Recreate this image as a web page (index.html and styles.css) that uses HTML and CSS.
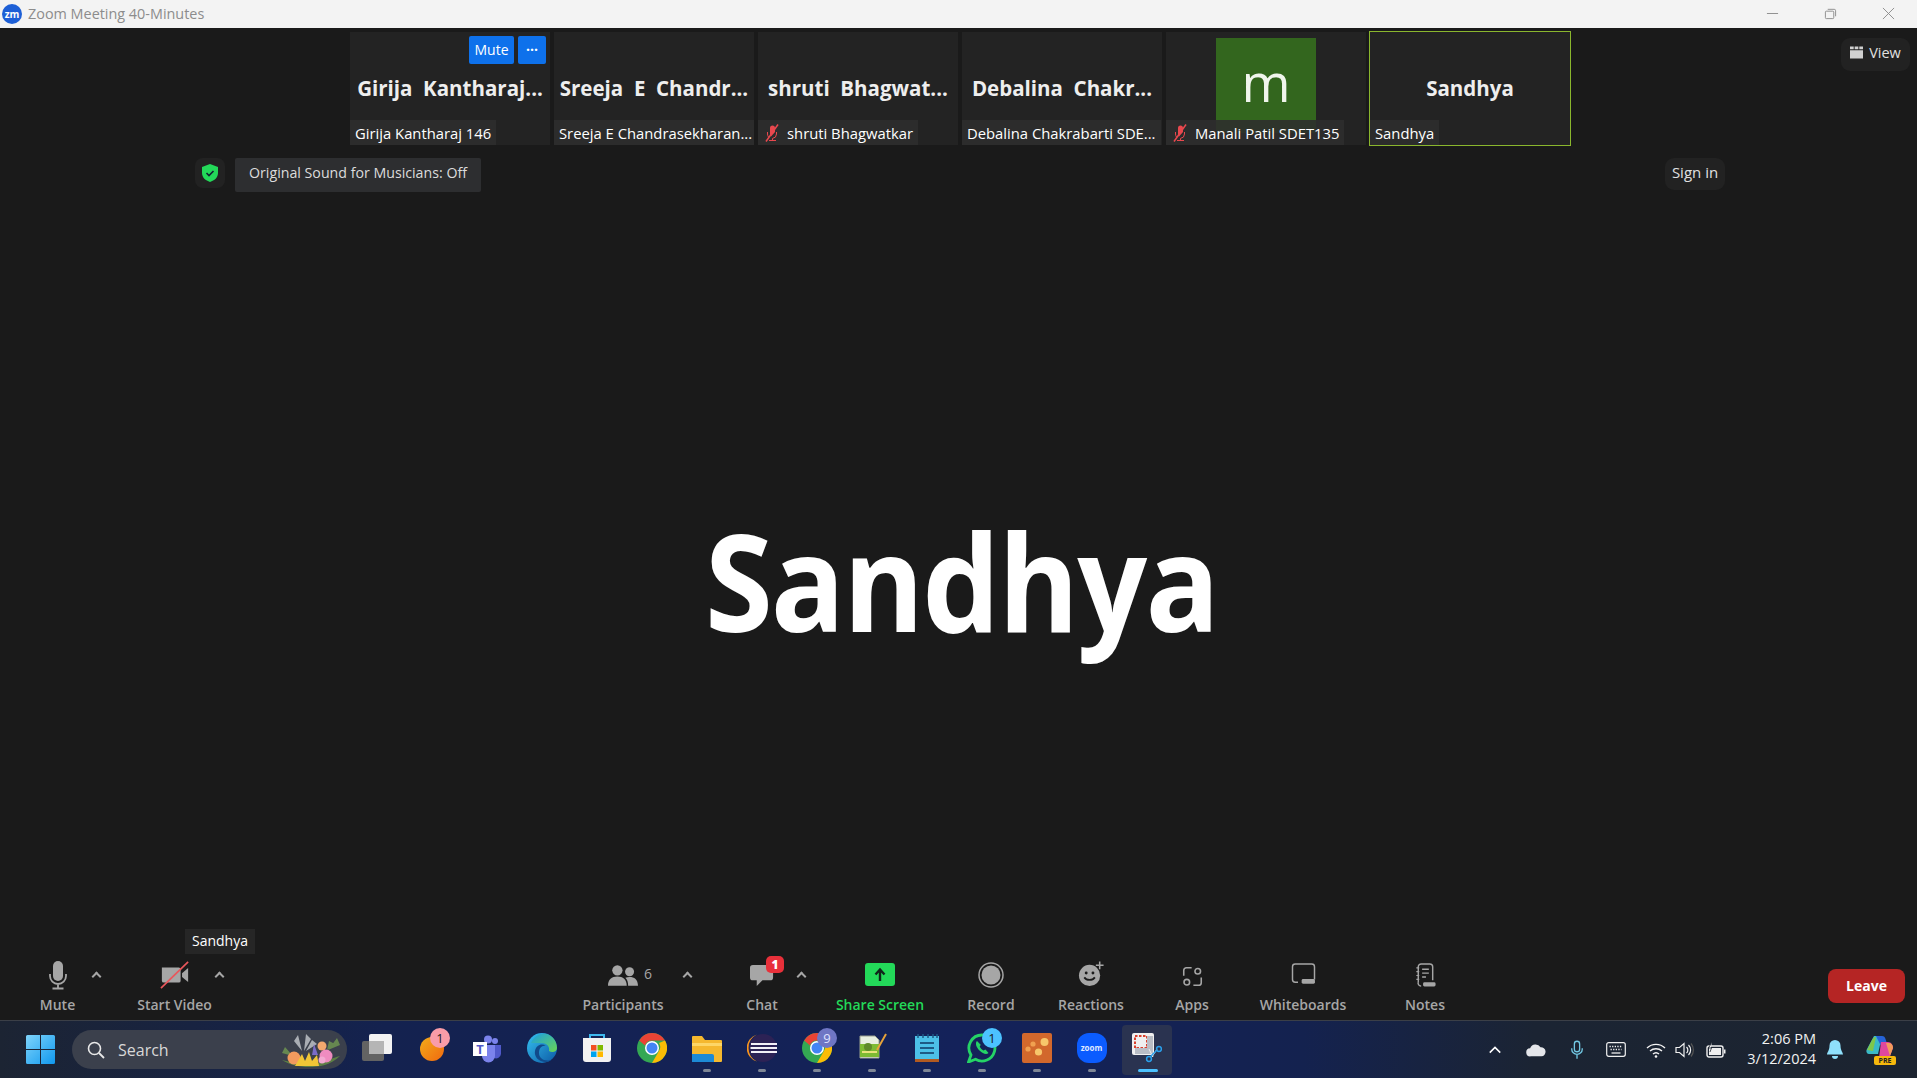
FILE: index.html
```html
<!DOCTYPE html>
<html lang="en">
<head>
    <meta charset="UTF-8">
    <title>Zoom Meeting 40-Minutes</title>
    <link rel="stylesheet" href="styles.css">
</head>
<body>

<!-- title bar -->
<div class="titlebar">
    <div class="app-badge">zm</div>
    <div class="app-title">Zoom Meeting 40-Minutes</div>
    <div class="win-buttons">
        <svg class="win-btn" viewBox="0 0 14 14"><path d="M1 7h12" stroke="#8a8a8a" fill="none"/></svg>
        <svg class="win-btn" viewBox="0 0 14 14"><path d="M2.5 4.5h7a1 1 0 0 1 1 1v6a1 1 0 0 1-1 1h-7a1 1 0 0 1-1-1v-6a1 1 0 0 1 1-1zM4 2.500h7a1.500 1.500 0 0 1 1.500 1.500v6" stroke="#8a8a8a" fill="none"/></svg>
        <svg class="win-btn" viewBox="0 0 14 14"><path d="M1 1l12 12M13 1L1 13" stroke="#8a8a8a" fill="none"/></svg>
    </div>
</div>

<div class="stage">
    <!-- thumbnails -->
    <div class="thumb-row">
        <div class="thumb">
            <div class="thumb-actions"><span class="mini-btn mute-btn">Mute</span><span class="mini-btn dots-btn">···</span></div>
            <div class="thumb-name">Girija&nbsp; Kantharaj...</div>
            <div class="thumb-label">Girija Kantharaj 146</div>
        </div>
        <div class="thumb">
            <div class="thumb-name">Sreeja&nbsp; E&nbsp; Chandr...</div>
            <div class="thumb-label">Sreeja E Chandrasekharan...</div>
        </div>
        <div class="thumb">
            <div class="thumb-name">shruti&nbsp; Bhagwat...</div>
            <div class="thumb-label">
                <svg class="muted-mic" viewBox="0 0 16 18"><path d="M8.500 1.500a2.500 2.500 0 0 1 2.500 2.500v4l-4 4.500a2.500 2.500 0 0 1-1-2V4a2.500 2.500 0 0 1 2.500-2.500z" fill="#e8484e"/><path d="M3.500 8v2a5 5 0 0 0 1 3M12.500 8v2a4.500 4.500 0 0 1-4 4.400V16M5 16.500h7" fill="none" stroke="#e8484e"/><path d="M14 .5L2 17.500" stroke="#e8484e" stroke-width="1.500"/></svg>
                shruti Bhagwatkar
            </div>
        </div>
        <div class="thumb">
            <div class="thumb-name">Debalina&nbsp; Chakr...</div>
            <div class="thumb-label">Debalina Chakrabarti SDE...</div>
        </div>
        <div class="thumb">
            <div class="avatar">m</div>
            <div class="thumb-label">
                <svg class="muted-mic" viewBox="0 0 16 18"><path d="M8.500 1.500a2.500 2.500 0 0 1 2.500 2.500v4l-4 4.500a2.500 2.500 0 0 1-1-2V4a2.500 2.500 0 0 1 2.500-2.500z" fill="#e8484e"/><path d="M3.500 8v2a5 5 0 0 0 1 3M12.500 8v2a4.500 4.500 0 0 1-4 4.400V16M5 16.500h7" fill="none" stroke="#e8484e"/><path d="M14 .5L2 17.500" stroke="#e8484e" stroke-width="1.500"/></svg>
                Manali Patil SDET135
            </div>
        </div>
        <div class="thumb thumb-active">
            <div class="thumb-name">Sandhya</div>
            <div class="thumb-label">Sandhya</div>
        </div>
    </div>

    <div class="view-btn">
        <svg class="view-icon" viewBox="0 0 14 13"><path d="M0 0h4v3H0zM5 0h4v3H5zM10 0h4v3h-4zM0 4h14v9H0z" fill="#d0d0d0"/></svg>
        View
    </div>

    <!-- status row -->
    <div class="status-row">
        <div class="shield-box">
            <svg class="shield" viewBox="0 0 16 18"><path d="M8 0l8 3v6c0 4.500-3.500 7.500-8 9-4.500-1.500-8-4.500-8-9V3z" fill="#23d959"/><path d="M4.500 9l2.500 2.500 4.500-4.500" fill="none" stroke="#123" stroke-width="1.600"/></svg>
        </div>
        <div class="sound-box">Original Sound for Musicians: Off</div>
        <div class="sign-in">Sign in</div>
    </div>

    <!-- main speaker -->
    <div class="main-name"><span class="main-name-text">Sandhya</span></div>

    <!-- meeting controls -->
    <div class="toolbar">
        <div class="tool tool-mute">
            <svg class="tool-icon" viewBox="0 0 30 30"><path d="M15 1a5 5 0 0 1 5 5v10a5 5 0 0 1-10 0V6a5 5 0 0 1 5-5z" fill="#a6a6a6"/><path d="M7 14v2a8 8 0 0 0 16 0v-2M15 24v4M9.500 28.500h11" fill="none" stroke="#a6a6a6" stroke-width="1.800"/></svg>
            <span>Mute</span>
            <i class="caret"></i>
        </div>
        <div class="tool tool-video">
            <svg class="tool-icon" viewBox="0 0 32 30"><path d="M2 7h18a2 2 0 0 1 2 2v12a2 2 0 0 1-2 2H4a2 2 0 0 1-2-2z" fill="#a6a6a6"/><path d="M23.500 13l6.500-5.500v15L23.500 17z" fill="#a6a6a6"/><path d="M1 29L30 1" stroke="#e8565b" stroke-width="1.800"/></svg>
            <span>Start Video</span>
            <i class="caret"></i>
        </div>
        <div class="tooltip">Sandhya</div>

        <div class="tool-center">
            <div class="tool tool-people">
                <div class="people-icon">
                    <svg class="tool-icon" viewBox="0 0 32 24"><circle cx="10" cy="6.500" r="5.500" fill="#a6a6a6"/><circle cx="23" cy="8" r="4.800" fill="#a6a6a6"/><path d="M0 23c0-7 4-10 10-10s10 3 10 10zM21.500 23c0-4-1-6.500-3-8.500 1.500-.8 3-1 4.500-1 5 0 9 2.500 9 9.500z" fill="#a6a6a6"/></svg>
                    <em class="people-count">6</em>
                </div>
                <span>Participants</span>
                <i class="caret"></i>
            </div>
            <div class="tool tool-chat">
                <svg class="tool-icon" viewBox="0 0 28 26"><path d="M4 2h18a3 3 0 0 1 3 3v10a3 3 0 0 1-3 3H14l-6 6v-6H4a3 3 0 0 1-3-3V5a3 3 0 0 1 3-3z" fill="#a6a6a6"/></svg>
                <b class="chat-badge">1</b>
                <span>Chat</span>
                <i class="caret"></i>
            </div>
            <div class="tool tool-share">
                <svg class="tool-icon" viewBox="0 0 30 23"><rect width="30" height="23" rx="3" fill="#23d959"/><path d="M15 18V7M10.500 11.500L15 6.500l4.500 5" fill="none" stroke="#10241a" stroke-width="2.400"/></svg>
                <span>Share Screen</span>
            </div>
            <div class="tool tool-record">
                <svg class="tool-icon" viewBox="0 0 26 26"><circle cx="13" cy="13" r="12" fill="none" stroke="#a6a6a6" stroke-width="1.500"/><circle cx="13" cy="13" r="9.500" fill="#a6a6a6"/></svg>
                <span>Record</span>
            </div>
            <div class="tool tool-react">
                <svg class="tool-icon" viewBox="0 0 28 26"><circle cx="12" cy="14.500" r="11" fill="#a6a6a6"/><circle cx="8.500" cy="12" r="1.500" fill="#1a1a1a"/><circle cx="15.500" cy="12" r="1.500" fill="#1a1a1a"/><path d="M6.500 16.500c2.500 3.500 8.500 3.500 11 0" fill="none" stroke="#1a1a1a" stroke-width="1.800"/><path d="M22.500 0v8M18.500 4h8" stroke="#a6a6a6" stroke-width="1.600"/></svg>
                <span>Reactions</span>
            </div>
            <div class="tool tool-apps">
                <svg class="tool-icon" viewBox="0 0 24 24"><path d="M2 11V5a3 3 0 0 1 3-3h6M22 13v6a3 3 0 0 1-3 3h-6" fill="none" stroke="#a6a6a6" stroke-width="1.800"/><circle cx="18" cy="6" r="3.200" fill="none" stroke="#a6a6a6" stroke-width="1.800"/><circle cx="5.500" cy="18.500" r="3.200" fill="none" stroke="#a6a6a6" stroke-width="1.800"/></svg>
                <span>Apps</span>
            </div>
            <div class="tool tool-board">
                <svg class="tool-icon" viewBox="0 0 26 24"><path d="M7 21H4a3 3 0 0 1-3-3V4a3 3 0 0 1 3-3h18a3 3 0 0 1 3 3v14" fill="none" stroke="#a6a6a6" stroke-width="1.600"/><rect x="11" y="17.500" width="14.500" height="5" rx="1.500" fill="#a6a6a6"/></svg>
                <span>Whiteboards</span>
            </div>
            <div class="tool tool-notes">
                <svg class="tool-icon" viewBox="0 0 24 26"><path d="M5 20V4a3 3 0 0 1 3-3h9a3 3 0 0 1 3 3v14M5 20a3 3 0 0 0 3 4" fill="none" stroke="#a6a6a6" stroke-width="1.500"/><path d="M9 6.500h7M9 10.500h7M9 14.500h4" stroke="#a6a6a6" stroke-width="1.500"/><path d="M3 5h3M3 9h3M3 13h3M3 17h3" stroke="#a6a6a6" stroke-width="1.200"/><rect x="10" y="20" width="13" height="4.500" rx="1.500" fill="#a6a6a6"/></svg>
                <span>Notes</span>
            </div>
        </div>

        <div class="leave-btn">Leave</div>
    </div>
</div>

<!-- windows taskbar -->
<div class="taskbar">
    <svg class="start-icon" viewBox="0 0 29 29">
        <defs><linearGradient id="winBlue" x1="0" y1="0" x2="1" y2="1"><stop offset="0" stop-color="#7fd4fb"/><stop offset="1" stop-color="#1098ee"/></linearGradient></defs>
        <path d="M1.500 0H14v14H0V1.500A1.500 1.500 0 0 1 1.500 0zM15 0h12.500A1.500 1.500 0 0 1 29 1.500V14H15zM0 15h14v14H1.500A1.500 1.500 0 0 1 0 27.500zM15 15h14v12.500a1.500 1.500 0 0 1-1.500 1.500H15z" fill="url(#winBlue)"/>
    </svg>
    <div class="searchbox">
        <svg class="search-icon" viewBox="0 0 18 18"><circle cx="7.500" cy="7.500" r="6" fill="none" stroke="#e8e8e8" stroke-width="1.600"/><path d="M12 12l5 5" stroke="#e8e8e8" stroke-width="1.800"/></svg>
        <span class="search-text">Search</span>
        <svg class="search-art" viewBox="0 0 60 34">
            <path d="M1 27c8 5 17 7 27 7s22-2 31-11c-8 2-13 5-20 7-10 2-21 1-38-3z" fill="#5d7f45"/>
            <path d="M4 14l8 9-11-3zM56 5l-9 12 12-5zM48 8l-2 9 8-6z" fill="#668750"/>
            <path d="M17 2l4 16-8-10zM25 1l-2 17 7-12zM31 7l-6 11 11-7z" fill="#a9adb3"/>
            <circle cx="13" cy="25" r="6.500" fill="#f39a5e"/><circle cx="41" cy="13" r="4.500" fill="#f3a86e"/>
            <path d="M14 33l7-12 3 7 4-9 3 9 5-6 2 11z" fill="#f1c636"/>
            <path d="M31 22l2-11 4 11z" fill="#7a6cc9"/>
            <circle cx="45" cy="23" r="6.500" fill="#ef8cc0"/><circle cx="41" cy="27" r="3.500" fill="#f3a9d2"/>
        </svg>
    </div>

    <div class="task-icons">
        <div class="task-item">
            <svg class="task-svg" viewBox="0 0 30 30"><rect x="0" y="8" width="22" height="20" rx="2" fill="#636363"/><rect x="7" y="1" width="23" height="20" rx="2" fill="#f2f2f2"/><rect x="7" y="8" width="15" height="13" fill="#b5b5b5"/></svg>
        </div>
        <div class="task-item">
            <svg class="task-svg" viewBox="0 0 30 30">
                <defs><linearGradient id="orange" x1="0" y1="0" x2="1" y2="1"><stop offset="0" stop-color="#f2ac1a"/><stop offset="1" stop-color="#f0690f"/></linearGradient></defs>
                <circle cx="15" cy="16" r="12" fill="url(#orange)"/>
            </svg>
            <b class="task-badge badge-pink">1</b>
        </div>
        <div class="task-item">
            <svg class="task-svg" viewBox="0 0 30 30"><circle cx="23" cy="8" r="3" fill="#7b83eb"/><circle cx="16" cy="6.500" r="4" fill="#7b83eb"/><path d="M20 12h9v9a5 5 0 0 1-7 4z" fill="#5059c9"/><path d="M10 12h13v11a6.500 6.500 0 0 1-13 0z" fill="#7b83eb"/><rect x="1" y="9" width="14" height="14" fill="#fff"/><text x="8" y="20.500" class="teams-t">T</text></svg>
        </div>
        <div class="task-item">
            <svg class="task-svg" viewBox="0 0 30 30">
                <defs><linearGradient id="edge1" x1="0" y1="0" x2="1" y2="1"><stop offset="0" stop-color="#35c1f1"/><stop offset="1" stop-color="#0c59a4"/></linearGradient><linearGradient id="edge2" x1="0" y1="0" x2="1" y2="1"><stop offset="0" stop-color="#1b9de2"/><stop offset="1" stop-color="#6ad652"/></linearGradient></defs>
                <circle cx="15" cy="15" r="15" fill="url(#edge1)"/>
                <path d="M4 10C7 3 14 0 19 1c6 1 11 7 11 14 0 4-5 5-8 3 1-4-2-8-7-8-4 0-8 0-11 0z" fill="url(#edge2)"/>
                <path d="M12 20c0-5 3-8 7-7-4-3-10-1-11 5-1 5 3 11 11 11 2 0 4-1 5-2-7 2-12-2-12-7z" fill="#114a8b"/>
            </svg>
        </div>
        <div class="task-item">
            <svg class="task-svg" viewBox="0 0 30 30"><path d="M8 5V2h14v3" fill="none" stroke="#3fb9ee" stroke-width="2"/><path d="M1 5h28v21a3 3 0 0 1-3 3H4a3 3 0 0 1-3-3z" fill="#f2f2f2"/><path d="M9 12h5.500v5.500H9z" fill="#f25022"/><path d="M15.500 12H21v5.500h-5.500z" fill="#7fba00"/><path d="M9 18.500h5.500V24H9z" fill="#00a4ef"/><path d="M15.500 18.500H21V24h-5.500z" fill="#ffb900"/></svg>
        </div>
        <div class="task-item">
            <svg class="task-svg" viewBox="0 0 30 30"><circle cx="15" cy="15" r="15" fill="#34a853"/><path d="M15 0a15 15 0 0 1 13 7.500H15a7.500 7.500 0 0 0-7 5L2.200 7.500A15 15 0 0 1 15 0z" fill="#ea4335"/><path d="M28 7.500A15 15 0 0 1 15 30l6.500-11.300A7.500 7.500 0 0 0 22 10z" fill="#fbbc05"/><circle cx="15" cy="15" r="7" fill="#fff"/><circle cx="15" cy="15" r="5.500" fill="#4285f4"/></svg>
        </div>
        <div class="task-item has-dot">
            <svg class="task-svg" viewBox="0 0 30 30"><path d="M0 4a1 1 0 0 1 1-1h9l3 4h16a1 1 0 0 1 1 1v20a1 1 0 0 1-1 1H1a1 1 0 0 1-1-1z" fill="#f5b82e"/><path d="M0 10h30v3H0z" fill="#fdd667"/><path d="M0 21h20a2 2 0 0 1 2 2v6H0z" fill="#1d8ad6"/></svg>
        </div>
        <div class="task-item has-dot">
            <svg class="task-svg" viewBox="0 0 30 30"><circle cx="16" cy="15" r="14" fill="#2c2255"/><path d="M10 1.500a14 14 0 0 0 0 27 15 15 0 0 1 0-27z" fill="#f7941e"/><path d="M4 10h26v2H4zM3.500 14h27v2h-27zM4 18h26v2H4z" fill="#f2f0f7"/></svg>
        </div>
        <div class="task-item has-dot">
            <svg class="task-svg" viewBox="0 0 30 30"><circle cx="15" cy="15" r="15" fill="#34a853"/><path d="M15 0a15 15 0 0 1 13 7.500H15a7.500 7.500 0 0 0-7 5L2.200 7.500A15 15 0 0 1 15 0z" fill="#ea4335"/><path d="M28 7.500A15 15 0 0 1 15 30l6.500-11.300A7.500 7.500 0 0 0 22 10z" fill="#fbbc05"/><circle cx="15" cy="15" r="7" fill="#fff"/><circle cx="15" cy="15" r="5.500" fill="#4285f4"/></svg>
            <b class="task-badge badge-violet">9</b>
        </div>
        <div class="task-item has-dot">
            <svg class="task-svg" viewBox="0 0 30 30"><path d="M3 3h15l4 4v18H3z" fill="#e8efe0" stroke="#9aa08f"/><path d="M3 11h19v13H3z" fill="#7dbb33"/><circle cx="11" cy="14" r="4" fill="#5e8a2a"/><path d="M5 18h15v2H5z" fill="#e9e37a"/><path d="M29 1L20 17" stroke="#e6a33a" stroke-width="2"/></svg>
        </div>
        <div class="task-item has-dot">
            <svg class="task-svg" viewBox="0 0 30 30"><path d="M3 3h24v24H3z" fill="#4cc0e8"/><path d="M3 26h24v3H3z" fill="#b25a21"/><path d="M8 10h14M8 15h14M8 20h14" stroke="#1e5a85" stroke-width="2"/><path d="M6 1v4M11 1v4M16 1v4M21 1v4M25 1v4" stroke="#1e5a85" stroke-width="1.500"/></svg>
        </div>
        <div class="task-item has-dot">
            <svg class="task-svg" viewBox="0 0 30 30"><path d="M15 2a13 13 0 1 1-6.500 24.300L1.500 29l2.500-7A13 13 0 0 1 15 2z" fill="none" stroke="#25d366" stroke-width="2.800"/><path d="M10 8c-2 2-1 6 2.500 9.500s7 4.500 9 2.500l-3-3.500-2 1c-1.500-.8-3-2.300-3.800-3.800l1-2z" fill="#25d366"/></svg>
            <b class="task-badge badge-blue">1</b>
        </div>
        <div class="task-item has-dot">
            <svg class="task-svg" viewBox="0 0 30 30"><rect width="30" height="30" rx="2" fill="#d2682c"/><circle cx="22.500" cy="9" r="4" fill="#f7c76b"/><circle cx="16.500" cy="19" r="3.600" fill="#f7c76b"/><circle cx="11" cy="11" r="2.600" fill="#f0a050"/><circle cx="6" cy="16" r="2.600" fill="#f0a050"/></svg>
        </div>
        <div class="task-item has-dot">
            <div class="zoom-app">zoom</div>
        </div>
        <div class="task-item has-dot task-active">
            <svg class="task-svg" viewBox="0 0 30 30"><rect x="0" y="0" width="22" height="22" rx="2" fill="#f0f0f0"/><path d="M3 3h12v12H3z" fill="none" stroke="#d9412e" stroke-width="2" stroke-dasharray="2.500 1.500"/><path d="M15 15h6v6h-6zM15 3h6v12h-6zM3 15h12v6H3z" fill="#b9bdc5"/><path d="M17 16l4 8M25 16l-5 8" stroke="#eee"/><circle cx="27" cy="16" r="2.400" fill="none" stroke="#2aa0ec" stroke-width="1.500"/><circle cx="17" cy="26" r="2.400" fill="none" stroke="#2aa0ec" stroke-width="1.500"/><path d="M25 17l-7 7" stroke="#2aa0ec" stroke-width="1.500"/></svg>
        </div>
    </div>

    <div class="tray">
        <svg class="tray-icon tray-chevron" viewBox="0 0 16 16"><path d="M2 11l6-6 6 6" fill="none" stroke="#fff" stroke-width="1.800"/></svg>
        <svg class="tray-icon tray-cloud" viewBox="0 0 22 14"><path d="M5 14a4.500 4.500 0 0 1-.5-9A6.500 6.500 0 0 1 16 4a5 5 0 0 1 1 10z" fill="#e4e6ea"/></svg>
        <svg class="tray-icon tray-mic" viewBox="0 0 16 22"><rect x="5" y="1" width="6" height="12" rx="3" fill="none" stroke="#72c8e4" stroke-width="1.500"/><path d="M2 9v1a6 6 0 0 0 12 0V9M8 16v5" fill="none" stroke="#72c8e4" stroke-width="1.500"/></svg>
        <svg class="tray-icon tray-keys" viewBox="0 0 20 15"><rect x=".7" y=".7" width="18.600" height="13.600" rx="2" fill="none" stroke="#f0f0f0" stroke-width="1.200"/><path d="M3.500 4.500h13M4.500 7.500h11" stroke="#f0f0f0" stroke-width="1.300" stroke-dasharray="1.300 1.300"/><path d="M5.500 11h9" stroke="#f0f0f0" stroke-width="1.300"/></svg>
        <svg class="tray-icon tray-wifi" viewBox="0 0 20 16"><path d="M1 6a13 13 0 0 1 18 0M4 9a9 9 0 0 1 12 0M7 12a4.500 4.500 0 0 1 6 0" fill="none" stroke="#f4f4f4" stroke-width="1.400"/><circle cx="10" cy="14.500" r="1.300" fill="#f4f4f4"/></svg>
        <svg class="tray-icon tray-sound" viewBox="0 0 20 16"><path d="M1 5.500h3.500L9 1.500v13l-4.500-4H1z" fill="none" stroke="#f0f0f0" stroke-width="1.200"/><path d="M11.500 5a4 4 0 0 1 0 6M13.500 3a7 7 0 0 1 0 10" fill="none" stroke="#f0f0f0" stroke-width="1.200"/><path d="M16 1.500a10 10 0 0 1 0 13" fill="none" stroke="#555" stroke-width="1.200"/></svg>
        <svg class="tray-icon tray-battery" viewBox="0 0 20 16"><rect x="1" y="4" width="16" height="11" rx="2" fill="none" stroke="#f0f0f0" stroke-width="1.400"/><rect x="3" y="6" width="12" height="7" fill="#f0f0f0"/><rect x="18" y="7.500" width="1.500" height="4" fill="#f0f0f0"/><path d="M6 0L2.500 6h3L4 10" fill="#f0f0f0" stroke="#1d2430" stroke-width=".8"/></svg>
        <div class="clock"><div>2:06 PM</div><div>3/12/2024</div></div>
        <svg class="tray-icon tray-bell" viewBox="0 0 16 20"><path d="M8 0a5.500 5.500 0 0 1 5.500 5.500c0 5 2.500 7 2.500 9H0c0-2 2.500-4 2.500-9A5.500 5.500 0 0 1 8 0z" fill="#8fe0fb"/><path d="M5 16h6a3 3 0 0 1-6 0z" fill="#8fe0fb"/></svg>
        <div class="copilot">
            <svg class="copilot-svg" viewBox="0 0 28 24">
                <path d="M8 1h8l-4 18H3c-2 0-3-2-2.500-4z" fill="#39b9c8"/><path d="M1 15L6 5c1-2 2-3 4-3l-3 14z" fill="#7fc74a"/>
                <path d="M10 1h6c2 0 3 1 3.500 3L23 15H17z" fill="#2563d8"/><path d="M15 7h7c3 0 5 3 5 6l-3 8c-.5 1-2 2-3 2h-8z" fill="#e0479e"/><path d="M20 8h3c3 0 4 3 4 5l-3 8z" fill="#f39b5a"/>
            </svg>
            <span class="pre-tag">PRE</span>
        </div>
    </div>
</div>

</body>
</html>
```

FILE: styles.css
```css
* {
    box-sizing: border-box;
}

body {
    margin: 0;
    width: 1917px;
    height: 1078px;
    overflow: hidden;
    display: flex;
    flex-direction: column;
    font-family: "Open Sans", "Noto Sans", sans-serif;
    background: #1a1a1a;
}

/* title bar */
.titlebar {
    height: 28px;
    flex: none;
    display: flex;
    align-items: center;
    padding-left: 2px;
    padding-bottom: 1px;
    background: #f3f3f3;
}

.app-badge {
    width: 20px;
    height: 20px;
    border-radius: 50%;
    background: #1d5fd6;
    color: #fff;
    font-size: 10px;
    font-weight: 700;
    line-height: 20px;
    text-align: center;
}

.app-title {
    margin-left: 6px;
    font-size: 14.4px;
    color: #8c8c8c;
}

.win-buttons {
    margin-left: auto;
    display: flex;
    gap: 45px;
    padding-right: 22px;
}

.win-btn {
    width: 13px;
    height: 13px;
}

/* stage */
.stage {
    position: relative;
    flex: 1;
    display: flex;
    flex-direction: column;
    background: #1a1a1a;
    color: #fff;
}

.thumb-row {
    display: flex;
    gap: 4px;
    padding: 4px 0 0 350px;
    height: 118px;
}

.thumb {
    position: relative;
    width: 200px;
    height: 113px;
    background: #232323;
    display: flex;
    align-items: center;
    justify-content: center;
}

.thumb-active {
    outline: 1px solid #8ab62d;
}

.thumb-name {
    font-size: 20.5px;
    font-weight: 700;
    color: #eee;
    white-space: nowrap;
    margin-top: -2px;
}

.thumb-label {
    position: absolute;
    left: 0;
    bottom: 0;
    max-width: 100%;
    height: 25px;
    display: flex;
    align-items: center;
    gap: 6px;
    padding: 0 5px;
    background: rgba(46, 46, 46, .88);
    font-size: 14.8px;
    color: #fff;
    white-space: nowrap;
}

.muted-mic {
    width: 18px;
    height: 18px;
}

.thumb-actions {
    position: absolute;
    top: 4px;
    right: 4px;
    display: flex;
    gap: 4px;
}

.mini-btn {
    height: 28px;
    line-height: 28px;
    background: #0e71eb;
    border-radius: 2px;
    text-align: center;
    font-size: 14px;
    color: #fff;
}

.mute-btn {
    width: 45px;
}

.dots-btn {
    width: 28px;
    font-weight: 700;
    font-size: 14px;
}

.avatar {
    align-self: flex-start;
    width: 100px;
    height: 95px;
    margin-top: 6px;
    background: #33661e;
    color: #f0f5ec;
    font-size: 53px;
    font-weight: 500;
    text-align: center;
    line-height: 87px;
}

.view-btn {
    position: absolute;
    top: 10px;
    right: 7px;
    width: 69px;
    height: 33px;
    padding-bottom: 4px;
    border-radius: 9px;
    background: #222;
    display: flex;
    align-items: center;
    justify-content: center;
    gap: 6px;
    font-size: 14.5px;
    color: #e0e0e0;
}

.view-icon {
    width: 13px;
    height: 13px;
}

/* status row */
.status-row {
    display: flex;
    align-items: flex-start;
    padding: 12px 192px 0 195px;
    height: 46px;
}

.shield-box {
    width: 30px;
    height: 30px;
    border-radius: 8px;
    background: #222;
    display: flex;
    align-items: center;
    justify-content: center;
}

.shield {
    width: 16px;
    height: 18px;
}

.sound-box {
    margin-left: 10px;
    width: 246px;
    height: 34px;
    border-radius: 2px;
    background: #2d2e30;
    text-align: center;
    font-size: 14.2px;
    line-height: 30px;
    color: #dcdcdc;
}

.sign-in {
    margin-left: auto;
    width: 60px;
    height: 32px;
    border-radius: 9px;
    background: #222;
    text-align: center;
    font-size: 15px;
    line-height: 29px;
    color: #e0e0e0;
}

.main-name {
    flex: 1;
    display: flex;
    align-items: center;
    justify-content: center;
    padding: 9px 0 0 5px;
    color: #fff;
}

.main-name-text {
    font-size: 134px;
    font-weight: 700;
    letter-spacing: -2px;
    transform: scaleX(.918);
}

/* toolbar */
.toolbar {
    position: relative;
    flex: none;
    height: 61px;
    display: flex;
    padding-left: 20px;
}

.tool {
    position: relative;
    display: flex;
    flex-direction: column;
    align-items: center;
    flex: none;
    width: 60px;
    color: #a6a6a6;
    font-size: 14px;
    font-weight: 600;
    white-space: nowrap;
}

.tool span {
    position: absolute;
    top: 36px;
    left: 50%;
    transform: translateX(-50%);
}

.tool-icon {
    display: block;
    width: 30px;
    height: 30px;
    margin-top: 1px;
}

.caret {
    position: absolute;
    top: 14px;
    width: 7px;
    height: 7px;
    border-left: 2px solid #a6a6a6;
    border-top: 2px solid #a6a6a6;
    transform: rotate(45deg);
}

.tool-mute {
    width: 75px;
}

.tool-mute .caret {
    right: -5px;
}

.tool-video {
    width: 75px;
    margin-left: 42px;
}

.tool-video .caret {
    right: -11px;
}

.tool-center {
    display: flex;
    position: absolute;
    left: 0;
    top: 0;
    padding-left: 585px;
}

.tool-people {
    width: 76px;
}

.tool-people .caret {
    right: -30px;
}

.tool-people .tool-icon {
    height: 23px;
    margin-top: 5px;
}

.people-icon {
    position: relative;
}

.people-count {
    position: absolute;
    left: 36px;
    top: 5px;
    font-style: normal;
    font-weight: 400;
    font-size: 14px;
}

.tool-chat {
    margin-left: 71px;
}

.tool-chat .caret {
    right: -13px;
}

.tool-chat .tool-icon {
    width: 27px;
    height: 25px;
    margin-top: 4px;
}

.chat-badge {
    position: absolute;
    top: -3px;
    left: 34px;
    width: 18px;
    height: 17px;
    border-radius: 5px;
    background: #e8303a;
    color: #fff;
    font-size: 12px;
    line-height: 17px;
    text-align: center;
}

.tool-share {
    margin-left: 58px;
}

.tool-share span {
    color: #23d959;
}

.tool-share .tool-icon {
    height: 23px;
    margin-top: 4px;
}

.tool-record {
    margin-left: 51px;
}

.tool-record .tool-icon {
    width: 26px;
    height: 26px;
    margin-top: 3px;
}

.tool-react {
    margin-left: 40px;
}

.tool-react .tool-icon {
    width: 27px;
    height: 26px;
    margin-top: 2px;
}

.tool-apps {
    margin-left: 41px;
}

.tool-apps .tool-icon {
    width: 21px;
    height: 21px;
    margin-top: 7px;
}

.tool-board {
    margin-left: 51px;
}

.tool-board .tool-icon {
    width: 25px;
    height: 22px;
    margin-top: 4px;
}

.tool-notes {
    margin-left: 62px;
}

.tool-notes .tool-icon {
    width: 24px;
    height: 25px;
    margin-top: 4px;
}

.tooltip {
    position: absolute;
    top: -30px;
    left: 185px;
    width: 70px;
    height: 25px;
    background: #262626;
    text-align: center;
    font-size: 14px;
    line-height: 24px;
    color: #fff;
}

.leave-btn {
    position: absolute;
    right: 12px;
    top: 10px;
    width: 77px;
    height: 34px;
    border-radius: 8px;
    background: #b52524;
    color: #fff;
    font-size: 14px;
    font-weight: 700;
    text-align: center;
    line-height: 33px;
}

/* taskbar */
.taskbar {
    position: relative;
    flex: none;
    height: 58px;
    display: flex;
    align-items: center;
    border-top: 1px solid #3b3f47;
    background: linear-gradient(90deg, #1c2433 0, #14224f 20%, #14225a 50%, #14224f 68%, #1b2433 80%, #1c2430 100%);
    padding-left: 26px;
}

.start-icon {
    width: 29px;
    height: 29px;
    flex: none;
}

.searchbox {
    margin-left: 17px;
    width: 275px;
    height: 39px;
    flex: none;
    border-radius: 20px;
    background: #3b404c;
    display: flex;
    align-items: center;
    padding-left: 15px;
    position: relative;
}

.search-icon {
    width: 18px;
    height: 18px;
}

.search-text {
    margin-left: 13px;
    font-size: 16px;
    color: #d8d8d8;
}

.search-art {
    position: absolute;
    right: 6px;
    top: 3px;
    width: 60px;
    height: 34px;
}

.task-icons {
    display: flex;
    margin-left: 2px;
    height: 100%;
}

.task-item {
    position: relative;
    width: 55px;
    height: 100%;
    padding-bottom: 3px;
    display: flex;
    align-items: center;
    justify-content: center;
}

.task-svg {
    width: 30px;
    height: 30px;
}

.has-dot::after {
    content: "";
    position: absolute;
    left: 24px;
    bottom: 6px;
    width: 8px;
    height: 3px;
    border-radius: 2px;
    background: #7f8796;
}

.task-active::before {
    content: "";
    position: absolute;
    left: 3px;
    top: 4px;
    width: 50px;
    height: 50px;
    border-radius: 4px;
    background: #2a3350;
}

.task-active .task-svg {
    position: relative;
}

.task-active::after {
    left: 19px;
    width: 20px;
    background: #4cc2ff;
}

.teams-t {
    font-family: "Open Sans", sans-serif;
    font-size: 13px;
    font-weight: 700;
    fill: #5059c9;
    text-anchor: middle;
}

.task-badge {
    position: absolute;
    top: 7px;
    left: 28px;
    width: 20px;
    height: 20px;
    border-radius: 50%;
    font-size: 13px;
    font-weight: 400;
    line-height: 20px;
    text-align: center;
    color: #1a1a1a;
}

.badge-pink {
    left: 26px;
    background: #f99ca8;
}

.badge-violet {
    background: #6f76c4;
    color: #dfe2ff;
}

.badge-blue {
    background: #4cc2ff;
}

.zoom-app {
    width: 30px;
    height: 30px;
    border-radius: 12px;
    background: #0b5cff;
    color: #dfe9ff;
    font-size: 8px;
    font-weight: 700;
    line-height: 30px;
    text-align: center;
}

/* tray */
.tray {
    position: absolute;
    left: 0;
    top: 0;
    width: 100%;
    height: 100%;
    pointer-events: none;
    display: flex;
    align-items: center;
    justify-content: flex-end;
    padding-right: 21px;
}

.tray-icon {
    flex: none;
}

.tray-chevron { margin-right: 24px; width: 14px; height: 18px; }
.tray-cloud { margin-right: 24px; width: 20px; height: 14px; }
.tray-mic { margin-right: 22px; width: 14px; height: 20px; }
.tray-keys { margin-right: 20px; width: 20px; height: 15px; }
.tray-wifi { margin-right: 9px; width: 20px; height: 16px; }
.tray-sound { margin-right: 11px; width: 20px; height: 16px; }
.tray-battery { width: 20px; height: 16px; }

.clock {
    width: 90px;
    padding-bottom: 2px;
    text-align: right;
    color: #f2f2f2;
    font-size: 14.5px;
    line-height: 20px;
}

.tray-bell {
    margin-left: 11px;
    width: 16px;
    height: 20px;
}

.copilot {
    position: relative;
    margin-left: 23px;
    width: 30px;
    height: 30px;
}

.copilot-svg {
    width: 28px;
    height: 24px;
}

.pre-tag {
    position: absolute;
    right: 0;
    bottom: 0;
    width: 22px;
    height: 9px;
    border-radius: 2px;
    background: #f6b80c;
    color: #222;
    font-size: 7px;
    font-weight: 700;
    line-height: 9px;
    text-align: center;
}
```
